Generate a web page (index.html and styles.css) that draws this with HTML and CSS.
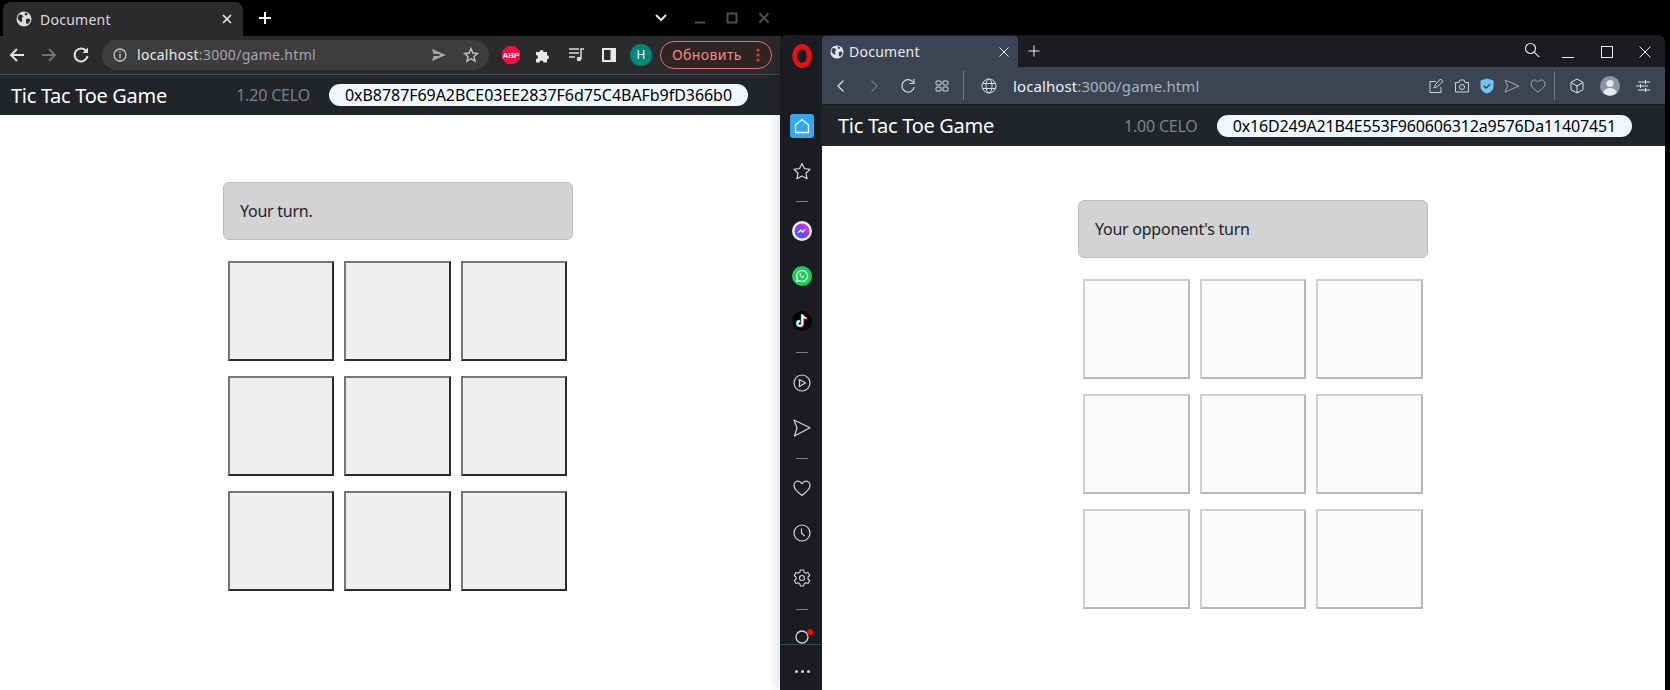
FILE: index.html
```html
<!DOCTYPE html>
<html>
    <head>
        <meta charset="utf-8">
        <title>Document</title>
        <link rel="stylesheet" href="styles.css">
    </head>
    <body>
        <!-- left window: chrome -->
        <div class="window chrome-win">
            <div class="tabstrip">
                <div class="tab">
                    <svg class="tab-globe" width="16" height="16" viewBox="0 0 16 16"><circle cx="8" cy="8" r="7.5" fill="#dcdcdc"/><path d="M3 3.5l3.2.6 1 1.6-1.6 1.4.8 2-1.2 2.4L3 9.5 1.5 7zM9 1.5l2.5 1-.6 2-2.2-.4zM10 8l3.6-.6.8 2.2-2.4 3.4-2-.8z" fill="#2b2b2b"/></svg>
                    <span class="tab-title">Document</span>
                    <svg class="tab-close" width="10" height="10" viewBox="0 0 10 10"><path d="M1 1l8 8M9 1l-8 8" stroke="#e8e8e8" stroke-width="1.7"/></svg>
                </div>
                <svg class="new-tab" width="14" height="14" viewBox="0 0 14 14"><path d="M7 1v12M1 7h12" stroke="#fff" stroke-width="2"/></svg>
                <div class="win-controls">
                    <svg width="14" height="10" viewBox="0 0 14 10"><path d="M2 2l5 5 5-5" fill="none" stroke="#e6e6e6" stroke-width="2"/></svg>
                    <svg class="ctl-min" width="12" height="12" viewBox="0 0 12 12"><path d="M1 10.5h10" stroke="#4c4c4c" stroke-width="2"/></svg>
                    <svg class="ctl-max" width="12" height="12" viewBox="0 0 12 12"><rect x="1.5" y="1.5" width="9" height="9" fill="none" stroke="#4c4c4c" stroke-width="2"/></svg>
                    <svg class="ctl-close" width="12" height="12" viewBox="0 0 12 12"><path d="M1.5 1.5l9 9M10.5 1.5l-9 9" stroke="#4c4c4c" stroke-width="2"/></svg>
                </div>
            </div>
            <div class="toolbar">
                <svg class="tb-btn" width="18" height="18" viewBox="0 0 18 18"><path d="M16 9H3M9 3L3 9l6 6" fill="none" stroke="#e2e2e2" stroke-width="2"/></svg>
                <svg class="tb-btn" width="18" height="18" viewBox="0 0 18 18"><path d="M2 9h13M9 3l6 6-6 6" fill="none" stroke="#727272" stroke-width="2"/></svg>
                <svg class="tb-btn" width="18" height="18" viewBox="0 0 18 18"><path d="M14.6 5.5A6.5 6.5 0 1 0 15.5 10" fill="none" stroke="#e2e2e2" stroke-width="2"/><path d="M16 1.500V7h-5.500z" fill="#e2e2e2"/></svg>
                <div class="omnibox">
                    <svg width="14" height="14" viewBox="0 0 14 14"><circle cx="7" cy="7" r="6" fill="none" stroke="#c4c4c4" stroke-width="1.3"/><path d="M7 6v4.500M7 3.500v1.300" stroke="#c4c4c4" stroke-width="1.4"/></svg>
                    <span class="url"><b>localhost</b>:3000/game.html</span>
                    <svg class="omni-send" width="16" height="14" viewBox="0 0 16 14"><path d="M1 1l14 6-14 6 1.500-5h6V6h-6z" fill="#a8a8a8"/></svg>
                    <svg class="omni-star" width="16" height="16" viewBox="0 0 16 16"><path d="M8 1.800l1.900 4.200 4.500.5-3.400 3 1 4.500L8 11.700 4 14l1-4.500-3.400-3 4.500-.5z" fill="none" stroke="#c4c4c4" stroke-width="1.400"/></svg>
                </div>
                <svg class="ext-abp" width="18" height="18" viewBox="0 0 18 18"><path d="M5.300 0h7.400L18 5.300v7.400L12.700 18H5.300L0 12.700V5.300z" fill="#f40d3f"/><text x="9" y="11.800" class="abp-text">ABP</text></svg>
                <svg class="ext-puzzle" width="16" height="16" viewBox="0 0 16 16"><path d="M1 5h3.500a2 2 0 1 1 4 0H12v3.200a2 2 0 1 1 0 4V15.500H8.500a2 2 0 1 0-4 0H1v-3.500a2 2 0 1 0 0-4z" fill="#e8e8e8"/></svg>
                <svg class="ext-music" width="17" height="15" viewBox="0 0 17 15"><path d="M1 2h10M1 6h10M1 10h6" stroke="#dcdcdc" stroke-width="1.500"/><circle cx="11" cy="12" r="2.300" fill="#dcdcdc"/><path d="M13 12V2h3" fill="none" stroke="#dcdcdc" stroke-width="1.500"/></svg>
                <svg class="ext-side" width="14" height="14" viewBox="0 0 14 14"><rect width="14" height="14" fill="#e8e8e8"/><rect x="2" y="2" width="6.500" height="10" fill="#2b2b2b"/></svg>
                <div class="profile">H</div>
                <div class="update-btn">
                    <span>Обновить</span>
                    <svg width="4" height="14" viewBox="0 0 4 14"><circle cx="2" cy="2" r="1.600" fill="#e33"/><circle cx="2" cy="7" r="1.600" fill="#e33"/><circle cx="2" cy="12" r="1.600" fill="#e33"/></svg>
                </div>
            </div>
            <nav class="navbar">
                <span class="brand">Tic Tac Toe Game</span>
                <span class="balance">1.20 CELO</span>
                <span class="address">0xB8787F69A2BCE03EE2837F6d75C4BAFb9fD366b0</span>
            </nav>
            <main class="page page-left">
                <div class="alert">Your turn.</div>
                <div class="board">
                    <button class="cell"></button><button class="cell"></button><button class="cell"></button>
                    <button class="cell"></button><button class="cell"></button><button class="cell"></button>
                    <button class="cell"></button><button class="cell"></button><button class="cell"></button>
                </div>
            </main>
        </div>

        <!-- right window: opera -->
        <div class="window opera-win">
            <aside class="sidebar">
                <div class="side-item logo"><svg width="20" height="24" viewBox="0 0 20 24"><ellipse cx="10" cy="12" rx="7.300" ry="9.500" fill="none" stroke="#e8101a" stroke-width="5"/></svg></div>
                <div class="side-item home-item"><div class="home-box"><svg width="16" height="16" viewBox="0 0 16 16"><path d="M8 1.500L14.500 7v7.500h-13V7z" fill="none" stroke="#fff" stroke-width="1.300" stroke-linejoin="round"/></svg></div></div>
                <div class="side-item"><svg width="18" height="18" viewBox="0 0 18 18"><path d="M9 1.500l2.400 5 5.600.8-4 3.900 1 5.500L9 14l-5 2.700 1-5.500-4-3.900 5.600-.8z" fill="none" stroke="#d4d6da" stroke-width="1.200" stroke-linejoin="round"/></svg></div>
                <div class="side-line"></div>
                <div class="side-item"><svg width="20" height="20" viewBox="0 0 20 20"><defs><linearGradient id="msg" x1="0" y1="1" x2="1" y2="0"><stop offset="0" stop-color="#1a6cff"/><stop offset=".6" stop-color="#a033ff"/><stop offset="1" stop-color="#ff4d8d"/></linearGradient></defs><circle cx="10" cy="10" r="10" fill="#eee"/><circle cx="10" cy="10" r="7.500" fill="url(#msg)"/><path d="M5.500 12l3-3.500 2 1.500 3.500-2-3 3.500-2-1.500z" fill="#fff" stroke="#fff" stroke-width=".6"/></svg></div>
                <div class="side-item"><svg width="20" height="20" viewBox="0 0 20 20"><circle cx="10" cy="10" r="10" fill="#1bd05a"/><path d="M10 4.500a5.500 5.500 0 0 0-4.700 8.300l-.7 2.700 2.700-.7A5.500 5.500 0 1 0 10 4.500z" fill="none" stroke="#fff" stroke-width="1.200"/><path d="M8 7.300c-.9.700-.6 2 .5 3.300s2.300 1.800 3.200 1.200l.5-.9-1.300-.8-.6.500c-.6-.2-1.200-.8-1.500-1.500l.5-.6-.6-1.300z" fill="#fff"/></svg></div>
                <div class="side-item"><svg width="20" height="20" viewBox="0 0 20 20"><circle cx="10" cy="10" r="10" fill="#050505"/><path d="M10.500 3.500v9a2.500 2.500 0 1 1-2.500-2.500M10.500 3.500c.2 2 1.500 3.500 3.800 3.700" fill="none" stroke="#25e4ee" stroke-width="2" transform="translate(-.7 -.3)"/><path d="M10.500 3.500v9a2.500 2.500 0 1 1-2.500-2.500M10.500 3.500c.2 2 1.500 3.500 3.800 3.700" fill="none" stroke="#fe2c55" stroke-width="2" transform="translate(.7 .5)"/><path d="M10.500 3.500v9a2.500 2.500 0 1 1-2.500-2.500M10.500 3.500c.2 2 1.500 3.500 3.800 3.700" fill="none" stroke="#fff" stroke-width="1.700"/></svg></div>
                <div class="side-line line-wide"></div>
                <div class="side-item"><svg width="18" height="18" viewBox="0 0 18 18"><circle cx="9" cy="9" r="8" fill="none" stroke="#d4d6da" stroke-width="1.200"/><path d="M6.300 5.500l6.200 3.500-6.200 3.500c.4-2.300.4-4.700 0-7z" fill="none" stroke="#d4d6da" stroke-width="1.200" stroke-linejoin="round"/></svg></div>
                <div class="side-item"><svg width="18" height="18" viewBox="0 0 18 18"><path d="M1 1l16 7.800L1.500 17 4 9z" fill="none" stroke="#d4d6da" stroke-width="1.200" stroke-linejoin="round"/></svg></div>
                <div class="side-line"></div>
                <div class="side-item"><svg width="18" height="17" viewBox="0 0 18 17"><path d="M9 15.500C5 12.500 1 9.500 1 5.500 1 3 3 1.200 5 1.200 6.800 1.200 8 2.200 9 3.700 10 2.200 11.200 1.200 13 1.200c2 0 4 1.800 4 4.300 0 4-4 7-8 10z" fill="none" stroke="#d4d6da" stroke-width="1.200" stroke-linejoin="round"/></svg></div>
                <div class="side-item"><svg width="18" height="18" viewBox="0 0 18 18"><circle cx="9" cy="9" r="8" fill="none" stroke="#d4d6da" stroke-width="1.200"/><path d="M8.500 4.500V9l3 3" fill="none" stroke="#d4d6da" stroke-width="1.200"/></svg></div>
                <div class="side-item"><svg width="18" height="18" viewBox="0 0 18 18"><path d="M7.300 1h3.400l.5 2.300 1.600.9 2.200-.7 1.700 3-1.700 1.500v2l1.700 1.500-1.700 3-2.200-.7-1.600.9-.5 2.300H7.300l-.5-2.300-1.600-.9-2.200.7-1.700-3L3 10V8L1.300 6.500l1.700-3 2.200.7 1.600-.9z" fill="none" stroke="#d4d6da" stroke-width="1.100" stroke-linejoin="round"/><circle cx="9" cy="9" r="2.500" fill="none" stroke="#d4d6da" stroke-width="1.100"/></svg></div>
                <div class="side-line line-wide"></div>
                <div class="side-status">
                    <svg width="18" height="18" viewBox="0 0 18 18"><circle cx="9" cy="9" r="6" fill="none" stroke="#d4d6da" stroke-width="1.300"/></svg>
                    <span class="red-dot"></span>
                </div>
                <div class="side-more"><span></span><span></span><span></span></div>
            </aside>
            <div class="opera-main">
                <div class="op-tabstrip">
                    <div class="op-tab">
                        <svg width="14" height="14" viewBox="0 0 16 16"><circle cx="8" cy="8" r="7.500" fill="#e4e6ea"/><path d="M3 3.500l3.200.6 1 1.600-1.600 1.400.8 2-1.200 2.400L3 9.500 1.500 7zM9 1.500l2.500 1-.6 2-2.200-.4zM10 8l3.600-.6.800 2.200-2.400 3.400-2-.8z" fill="#3b4453"/></svg>
                        <span class="tab-title">Document</span>
                        <svg class="tab-close" width="10" height="10" viewBox="0 0 10 10"><path d="M.5.500l9 9M9.500.500l-9 9" stroke="#e8eaee" stroke-width="1"/></svg>
                    </div>
                    <svg class="op-new" width="12" height="12" viewBox="0 0 12 12"><path d="M6 .5v11M.5 6h11" stroke="#e8eaee" stroke-width="1"/></svg>
                    <div class="op-controls">
                        <svg class="op-search" width="16" height="16" viewBox="0 0 16 16"><circle cx="6.500" cy="6.500" r="5" fill="none" stroke="#dfe1e5" stroke-width="1.200"/><path d="M10.200 10.200l5 5" stroke="#dfe1e5" stroke-width="1.200"/></svg>
                        <svg class="op-min" width="12" height="12" viewBox="0 0 12 12"><path d="M0 11.500h12" stroke="#e8eaee" stroke-width="1"/></svg>
                        <svg class="op-max" width="12" height="12" viewBox="0 0 12 12"><rect x=".5" y=".5" width="11" height="11" fill="none" stroke="#e8eaee" stroke-width="1"/></svg>
                        <svg class="op-close" width="12" height="12" viewBox="0 0 12 12"><path d="M.5.500l11 11M11.500.500l-11 11" stroke="#e8eaee" stroke-width="1"/></svg>
                    </div>
                </div>
                <div class="op-toolbar">
                    <svg class="op-b" width="14" height="14" viewBox="0 0 14 14"><path d="M9.500 1.500L4 7l5.500 5.500" fill="none" stroke="#e2e5ea" stroke-width="1.200"/></svg>
                    <svg class="op-b" width="14" height="14" viewBox="0 0 14 14"><path d="M4.500 1.500L10 7l-5.500 5.500" fill="none" stroke="#6f7784" stroke-width="1.200"/></svg>
                    <svg class="op-b" width="16" height="16" viewBox="0 0 16 16"><path d="M13.300 4.500A6.200 6.200 0 1 0 14.200 9" fill="none" stroke="#d8dbe0" stroke-width="1.200"/><path d="M14 1v4.500H9.500" fill="none" stroke="#d8dbe0" stroke-width="1.200"/></svg>
                    <svg class="op-b" width="14" height="14" viewBox="0 0 14 14"><g fill="none" stroke="#d8dbe0" stroke-width="1"><rect x="1" y="2" width="5" height="4" rx="1"/><rect x="8" y="2" width="5" height="4" rx="1"/><rect x="1" y="8" width="5" height="4" rx="1"/><rect x="8" y="8" width="5" height="4" rx="1"/></g></svg>
                    <span class="op-sep"></span>
                    <svg class="op-globe" width="16" height="16" viewBox="0 0 16 16"><g fill="none" stroke="#d8dbe0" stroke-width="1"><circle cx="8" cy="8" r="7"/><ellipse cx="8" cy="8" rx="3" ry="7"/><path d="M1.500 5.500h13M1.500 10.500h13"/></g></svg>
                    <span class="url op-url"><b>localhost</b>:3000/game.html</span>
                    <div class="op-tools">
                        <svg width="16" height="16" viewBox="0 0 16 16"><g fill="none" stroke="#cfd2d8" stroke-width="1"><path d="M8 3.500H2v11h11V9"/><path d="M12.500 1l2.500 2.500-5.500 5-3.500 1.500 1.500-3.500z"/></g></svg>
                        <svg width="16" height="16" viewBox="0 0 16 16"><g fill="none" stroke="#cfd2d8" stroke-width="1"><path d="M1.500 4.500h3.500l1-2.500h4l1 2.500h3.500v9.500h-13z"/><circle cx="8" cy="9" r="2.500"/></g></svg>
                        <svg width="14" height="16" viewBox="0 0 14 16"><path d="M7 .5l6.500 2v6c0 3.500-3 6-6.500 7-3.500-1-6.500-3.500-6.500-7v-6z" fill="#6ec6f5"/><path d="M3.800 7.800l2.300 2.200 4-3.800" fill="none" stroke="#3b4453" stroke-width="1.500"/></svg>
                        <svg width="16" height="14" viewBox="0 0 16 14"><path d="M1 1l14 6L1 13l2.500-6z" fill="none" stroke="#a2a7b0" stroke-width="1"/></svg>
                        <svg width="16" height="14" viewBox="0 0 16 14"><path d="M8 13C4.500 10.500 1 8 1 4.500 1 2.500 2.700 1 4.500 1 6 1 7.200 2 8 3 8.800 2 10 1 11.500 1 13.300 1 15 2.500 15 4.500 15 8 11.500 10.500 8 13z" fill="none" stroke="#a2a7b0" stroke-width="1"/></svg>
                    </div>
                    <span class="op-sep op-sep2"></span>
                    <svg class="op-cube" width="16" height="16" viewBox="0 0 16 16"><g fill="none" stroke="#e0e2e6" stroke-width="1"><path d="M8 1l6 3.300v7.400L8 15l-6-3.300V4.300z"/><path d="M2 4.300L8 8l6-3.700M8 8v7"/></g></svg>
                    <svg class="op-avatar" width="20" height="20" viewBox="0 0 20 20"><circle cx="10" cy="10" r="10" fill="#8d96a4"/><circle cx="10" cy="7.500" r="3.600" fill="#e8eaee"/><path d="M3.200 17c.8-3.500 3.500-5 6.800-5s6 1.500 6.800 5a10 10 0 0 1-13.600 0z" fill="#e8eaee"/></svg>
                    <svg class="op-sliders" width="14" height="12" viewBox="0 0 14 12"><g stroke="#dfe1e5" stroke-width="1"><path d="M2 2h12M0 6h12M2 10h12"/><path d="M9.500 0v4M4.500 4v4M9.500 8v4"/></g></svg>
                </div>
                <nav class="navbar">
                    <span class="brand">Tic Tac Toe Game</span>
                    <span class="balance">1.00 CELO</span>
                    <span class="address">0x16D249A21B4E553F960606312a9576Da11407451</span>
                </nav>
                <main class="page page-right">
                    <div class="alert">Your opponent's turn</div>
                    <div class="board board-off">
                        <button class="cell" disabled></button><button class="cell" disabled></button><button class="cell" disabled></button>
                        <button class="cell" disabled></button><button class="cell" disabled></button><button class="cell" disabled></button>
                        <button class="cell" disabled></button><button class="cell" disabled></button><button class="cell" disabled></button>
                    </div>
                </main>
            </div>
        </div>
    </body>
</html>
```

FILE: styles.css
```css
* {
    box-sizing: border-box;
}

body {
    margin: 0;
    width: 1670px;
    height: 690px;
    overflow: hidden;
    position: relative;
    background-color: #000;
    font-family: "Noto Sans", Arial, sans-serif;
}

.window {
    position: absolute;
    overflow: hidden;
}

.chrome-win {
    left: 0;
    top: 0;
    width: 781px;
    height: 690px;
    display: flex;
    flex-direction: column;
}

.opera-win {
    left: 780px;
    top: 35px;
    width: 885px;
    height: 655px;
    display: flex;
    border-radius: 8px 8px 0 0;
    background-color: #1a1c21;
    box-shadow: -6px 0 8px rgba(0, 0, 0, 0.08);
}

/* chrome tabs */
.tabstrip {
    height: 36px;
    flex-shrink: 0;
    display: flex;
    align-items: flex-end;
    background-color: #000;
}

.tab {
    width: 240px;
    height: 34px;
    margin-left: 3px;
    padding: 0 11px 0 13px;
    display: flex;
    align-items: center;
    background-color: #2b2b2d;
    border-radius: 8px 8px 0 0;
}

.tab-title {
    margin-left: 8px;
    font-size: 14px;
    letter-spacing: 0.25px;
    color: #dcdcdc;
}

.tab-close {
    margin-left: auto;
}

.new-tab {
    margin: 0 0 11px 15px;
}

.win-controls {
    margin-left: auto;
    padding: 0 11px 12px 0;
    display: flex;
    align-items: center;
}

.ctl-min {
    margin-left: 26px;
}

.ctl-max {
    margin-left: 20px;
}

.ctl-close {
    margin-left: 20px;
}

/* chrome toolbar */
.toolbar {
    height: 39px;
    flex-shrink: 0;
    padding: 0 0 1px 8px;
    display: flex;
    align-items: center;
    background-color: #2b2b2d;
    border-bottom: 1px solid #4a4a4c;
}

.tb-btn {
    margin-right: 14px;
}

.omnibox {
    width: 387px;
    height: 30px;
    margin-left: -2px;
    padding: 0 10px 0 11px;
    display: flex;
    align-items: center;
    background-color: #3d3d3f;
    border-radius: 15px;
}

.url {
    margin-left: 10px;
    font-size: 14px;
    letter-spacing: 0.3px;
    color: #a6a6a6;
}

.url b {
    font-weight: normal;
    color: #eaeaea;
}

.omni-send {
    margin-left: auto;
}

.omni-star {
    margin-left: 16px;
}

.ext-abp {
    margin-left: 13px;
}

.abp-text {
    font-family: "Liberation Sans", Arial, sans-serif;
    font-size: 8px;
    font-weight: bold;
    fill: #fff;
    text-anchor: middle;
}

.ext-puzzle {
    margin-left: 15px;
}

.ext-music {
    margin-left: 17px;
}

.ext-side {
    margin-left: 17px;
}

.profile {
    width: 22px;
    height: 22px;
    margin-left: 14px;
    border-radius: 50%;
    background-color: #00897b;
    color: #fff;
    font-size: 12px;
    line-height: 22px;
    text-align: center;
}

.update-btn {
    width: 112px;
    height: 28px;
    margin-left: 8px;
    padding: 0 11px;
    display: flex;
    align-items: center;
    justify-content: space-between;
    border: 1px solid #e57373;
    border-radius: 14px;
    background-color: #2f2424;
    color: #f28b82;
    font-size: 14px;
    letter-spacing: 0.4px;
}

/* site navbar */
.navbar {
    height: 40px;
    flex-shrink: 0;
    padding: 0 33px 0 11px;
    display: flex;
    align-items: center;
    background-color: #212529;
}

.opera-main .navbar {
    height: 41px;
    padding-left: 16px;
}

.brand {
    font-size: 20px;
    letter-spacing: -0.3px;
    color: #fff;
}

.balance {
    margin-left: auto;
    font-size: 16px;
    letter-spacing: -0.2px;
    color: #7b8188;
}

.address {
    margin-left: 19px;
    padding: 0 16px;
    height: 22px;
    line-height: 22px;
    border-radius: 11px;
    background-color: aliceblue;
    color: #000;
    font-size: 16px;
    letter-spacing: -0.05px;
}

.opera-main .address {
    letter-spacing: -0.15px;
}

/* game */
.page {
    flex: 1;
    background-color: #fff;
}

.page-left {
    padding: 67px 0 0 223px;
}

.page-right {
    padding: 54px 0 0 256px;
}

.alert {
    width: 350px;
    padding: 16px;
    border: 1px solid #bebebe;
    border-radius: 6px;
    background-color: #d3d3d3;
    color: #212529;
    font-size: 16px;
    letter-spacing: -0.25px;
    line-height: 24px;
}

.board {
    margin: 21px 0 0 5px;
    display: grid;
    grid-template-columns: repeat(3, 106.500px);
    grid-auto-rows: 100px;
    column-gap: 10px;
    row-gap: 15px;
}

.page-left .board {
    margin-left: 4.900px;
}

.cell {
    padding: 0;
    background-color: #efefef;
    border: 2px solid;
    border-color: #767676 #2b2b2b #2b2b2b #767676;
}

.cell:disabled {
    background-color: #fafafa;
    border-color: #d0d0d0 #b8b8b8 #b8b8b8 #d0d0d0;
}

/* opera sidebar */
.sidebar {
    width: 42px;
    flex-shrink: 0;
    padding: 7px 0 0 2px;
    display: flex;
    flex-direction: column;
    align-items: center;
    background-color: #1a1c21;
}

.side-item {
    width: 100%;
    height: 45px;
    flex-shrink: 0;
    display: flex;
    align-items: center;
    justify-content: center;
}

.logo {
    height: 28px;
}

.home-item {
    margin-top: 33.500px;
}

.home-box {
    width: 24px;
    height: 24px;
    display: flex;
    align-items: center;
    justify-content: center;
    border-radius: 3px;
    background-color: #33a8ee;
}

.side-line {
    width: 12px;
    height: 1px;
    margin: 7px 0;
    flex-shrink: 0;
    background-color: #7b8088;
}

.line-wide {
    margin: 8px 0;
}

.side-status {
    position: relative;
    height: 18px;
    margin-top: 10.500px;
    flex-shrink: 0;
}

.red-dot {
    position: absolute;
    top: 1px;
    right: -2px;
    width: 6px;
    height: 6px;
    border-radius: 50%;
    background-color: #f00;
}

.side-more {
    width: 42px;
    margin-left: -2px;
    flex: 1;
    margin-top: -2px;
    padding: 8px 0 0 2px;
    display: flex;
    align-items: center;
    justify-content: center;
    gap: 3px;
    border-top: 1px solid #3b4453;
}

.side-more span {
    width: 3px;
    height: 3px;
    border-radius: 50%;
    background-color: #d4d6da;
}

/* opera main */
.opera-main {
    flex: 1;
    min-width: 0;
    display: flex;
    flex-direction: column;
}

.op-tabstrip {
    height: 32px;
    flex-shrink: 0;
    display: flex;
    align-items: stretch;
    background-color: #1a1c21;
}

.op-tab {
    width: 196px;
    margin-top: 1px;
    padding: 0 9px 0 8px;
    display: flex;
    align-items: center;
    background-color: #3b4453;
    border-radius: 4px 4px 0 0;
}

.op-tab .tab-title {
    margin-left: 5px;
    color: #e8eaee;
}

.op-new {
    margin: 10px 0 0 10px;
}

.op-controls {
    margin-left: auto;
    padding: 7px 14px 0 0;
    display: flex;
    align-items: flex-start;
}

.op-min {
    margin: 4px 0 0 22px;
}

.op-max {
    margin: 4px 0 0 27px;
}

.op-close {
    margin: 4px 0 0 26px;
}

.op-toolbar {
    height: 38px;
    flex-shrink: 0;
    padding-left: 12px;
    display: flex;
    align-items: center;
    background-color: #3b4453;
    border-bottom: 1px solid #15171b;
}

.op-b {
    margin-right: 19px;
}

.op-sep {
    width: 1px;
    height: 29px;
    margin-left: -5px;
    background-color: #6f7784;
}

.op-globe {
    margin-left: 17px;
}

.op-url {
    margin-left: 16px;
    font-size: 15px;
    letter-spacing: 0.1px;
    color: #a9afb9;
}

.op-url b {
    color: #eef0f3;
}

.op-tools {
    margin-left: auto;
    display: flex;
    align-items: center;
    gap: 10px;
}

.op-sep2 {
    margin-left: 8px;
}

.op-cube {
    margin-left: 14px;
}

.op-avatar {
    margin-left: 15px;
}

.op-sliders {
    margin: 0 15px 0 16px;
}
```
